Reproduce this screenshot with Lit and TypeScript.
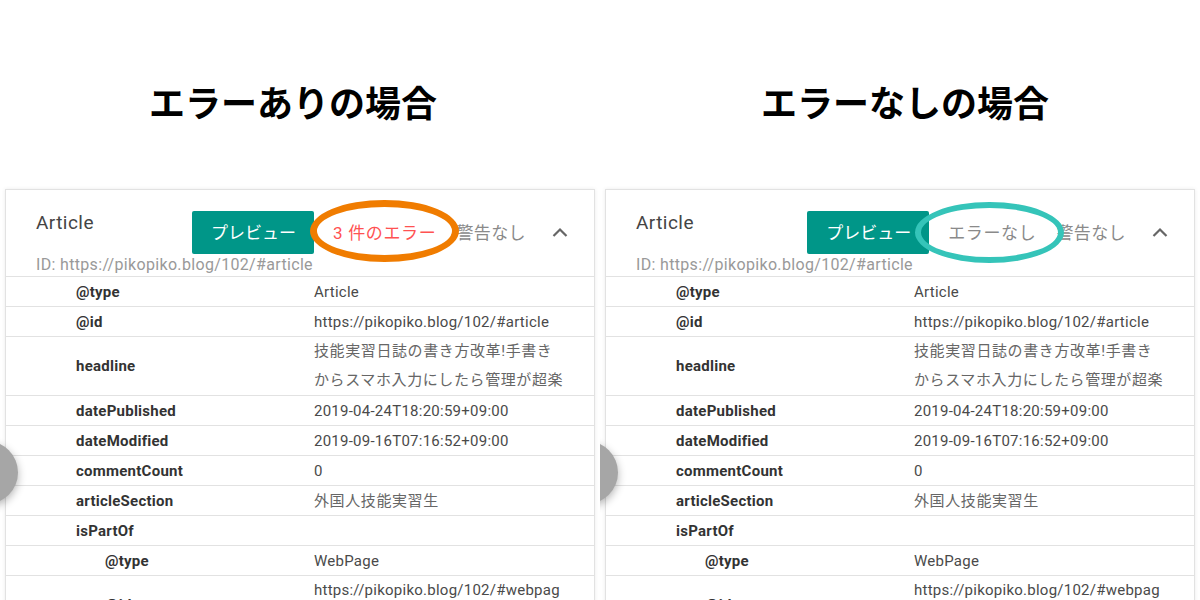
import { LitElement, html, css, svg, nothing } from 'lit';
import { customElement, property } from 'lit/decorators.js';

type Row = { key: string; value?: string; nested?: boolean; cjk?: boolean; wrap?: boolean };

const rows: Row[] = [
  { key: '@type', value: 'Article' },
  { key: '@id', value: 'https://pikopiko.blog/102/#article' },
  { key: 'headline', value: '技能実習日誌の書き方改革!手書きからスマホ入力にしたら管理が超楽', cjk: true, wrap: true },
  { key: 'datePublished', value: '2019-04-24T18:20:59+09:00' },
  { key: 'dateModified', value: '2019-09-16T07:16:52+09:00' },
  { key: 'commentCount', value: '0' },
  { key: 'articleSection', value: '外国人技能実習生', cjk: true },
  { key: 'isPartOf' },
  { key: '@type', value: 'WebPage', nested: true },
  { key: '@id', value: 'https://pikopiko.blog/102/#webpage', nested: true, wrap: true },
];

@customElement('result-panel')
export class ResultPanel extends LitElement {
  @property({ type: Boolean }) errors = false;

  static styles = css`
    :host {
      display: block;
      position: relative;
      width: 600px;
      height: 600px;
      overflow: hidden;
      font-family: Roboto, "Noto Sans CJK JP", sans-serif;
    }
    .title {
      height: 189px;
      box-sizing: border-box;
      padding: 77px 0 0 149px;
      margin: 0;
      font-family: "Noto Sans CJK JP", sans-serif;
      font-size: 36px;
      line-height: 48px;
      font-weight: 700;
      color: #000;
    }
    .clean .title {
      padding-left: 161px;
    }
    .card {
      margin-left: 5px;
      width: 590px;
      box-sizing: border-box;
      border: 1px solid #e2e2e2;
      box-shadow: 0 0 4px rgba(0, 0, 0, 0.08);
      background: #fff;
    }
    .head {
      height: 86px;
      box-sizing: border-box;
      padding: 21px 0 0 30px;
    }
    .top {
      display: flex;
      align-items: flex-start;
    }
    .name {
      font-size: 19px;
      line-height: 24px;
      letter-spacing: 0.45px;
      color: #444;
      flex: 1;
    }
    .preview {
      height: 43px;
      width: 122px;
      box-sizing: border-box;
      padding: 0 0 2px 19px;
      display: flex;
      align-items: center;
      background: #009688;
      color: #fff;
      border-radius: 2px;
      font-size: 17px;
      white-space: nowrap;
    }
    .status {
      height: 43px;
      box-sizing: border-box;
      display: flex;
      align-items: center;
      padding: 0 20px 2px 19px;
      font-size: 17px;
      letter-spacing: 0.65px;
      color: #8a8a8a;
      white-space: nowrap;
    }
    .status.bad {
      color: #ff5252;
    }
    .status.warn {
      padding-left: 0;
      padding-right: 0;
      letter-spacing: 0.4px;
    }
    .chevron {
      width: 16px;
      height: 43px;
      margin: 0 26px 0 26px;
      display: block;
    }
    .id {
      margin-top: 1px;
      font-size: 16px;
      line-height: 20px;
      letter-spacing: 0.33px;
      color: #999;
    }
    .row {
      display: grid;
      grid-template-columns: 308px 1fr;
      border-top: 1px solid #e2e2e2;
      padding-top: 1px;
      min-height: 28px;
      align-items: center;
      font-size: 15px;
      line-height: 28px;
      letter-spacing: 0.25px;
      color: #4a4a4a;
    }
    .row.wrap {
      padding-top: 0;
      line-height: 29px;
    }
    .key {
      padding-left: 70px;
      font-weight: 700;
      color: #333;
    }
    .nested .key {
      padding-left: 99px;
    }
    .value {
      padding-right: 28px;
      word-break: break-all;
    }
    .value.cjk {
      letter-spacing: 0.6px;
      color: #666;
    }
    .ring {
      position: absolute;
      box-sizing: border-box;
      top: 200px;
      height: 62px;
      border-radius: 50%;
      border: 7px solid #f07c00;
      left: 310px;
      width: 149px;
    }
    .clean .ring {
      left: 315px;
      top: 202px;
      height: 61px;
      border-width: 6px;
      border-color: #35c4b9;
    }
    .fab {
      position: absolute;
      left: -45px;
      top: 441px;
      width: 63px;
      height: 63px;
      border-radius: 50%;
      background: #a6a6a6;
      box-shadow: 0 3px 8px rgba(0, 0, 0, 0.3);
    }
  `;

  render() {
    return html`
      <div class=${this.errors ? 'errors' : 'clean'}>
        <h2 class="title">${this.errors ? 'エラーありの場合' : 'エラーなしの場合'}</h2>
        <div class="card">
          <div class="head">
            <div class="top">
              <div class="name">Article</div>
              <div class="preview">プレビュー</div>
              ${this.errors
                ? html`<div class="status bad">3 件のエラー</div>`
                : html`<div class="status">エラーなし</div>`}
              <div class="status warn">警告なし</div>
              <svg class="chevron" viewBox="0 0 16 43" fill="none">
                ${svg`<path d="M1.5 25 L8 18.5 L14.5 25" stroke="#666" stroke-width="2.2" />`}
              </svg>
            </div>
            <div class="id">ID: https://pikopiko.blog/102/#article</div>
          </div>
          ${rows.map(
            (r) => html`
              <div class="row ${r.nested ? 'nested' : ''} ${r.wrap ? 'wrap' : ''}">
                <div class="key">${r.key}</div>
                <div class="value ${r.cjk ? 'cjk' : ''}">${r.value ?? nothing}</div>
              </div>
            `
          )}
        </div>
        <div class="ring"></div>
        <div class="fab"></div>
      </div>
    `;
  }
}

@customElement('app-root')
export class AppRoot extends LitElement {
  static styles = css`
    :host {
      display: flex;
      width: 1200px;
      height: 600px;
      overflow: hidden;
      background: #fff;
    }
  `;

  render() {
    return html`
      <result-panel errors></result-panel>
      <result-panel></result-panel>
    `;
  }
}
